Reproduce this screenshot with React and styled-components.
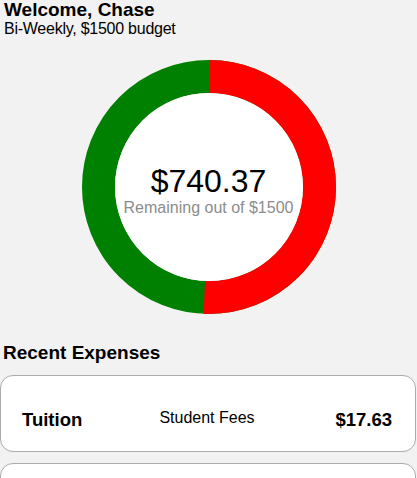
import React from "react";
import styled, { createGlobalStyle } from "styled-components";

const Global = createGlobalStyle`
  html, body { margin: 0; padding: 0; background: #f2f2f2; }
  body { font-family: "Liberation Sans", Arial, sans-serif; color: #000; }
`;

const Page = styled.div`
  display: flex;
  flex-direction: column;
  min-height: 478px;
  background: #f2f2f2;
`;

const Header = styled.header`
  padding: 0 4px;
`;

const Title = styled.h1`
  margin: 0;
  font-size: 19px;
  line-height: 20px;
  font-weight: 700;
`;

const Subtitle = styled.p`
  margin: 0;
  font-size: 16px;
  line-height: 18px;
  letter-spacing: -0.25px;
`;

const ChartWrap = styled.div`
  display: flex;
  justify-content: center;
  margin-top: 22px;
`;

const Chart = styled.div`
  position: relative;
  width: 254px;
  height: 254px;
`;

const ChartLabel = styled.div`
  position: absolute;
  inset: 0;
  padding-top: 6px;
  display: flex;
  flex-direction: column;
  align-items: center;
  justify-content: center;
`;

const Amount = styled.div`
  font-size: 32px;
  line-height: 36px;
`;

const Caption = styled.div`
  font-size: 16px;
  line-height: 18px;
  color: #8c8c8c;
`;

const SectionTitle = styled.h2`
  margin: 28px 0 0;
  padding: 0 3px;
  font-size: 19px;
  line-height: 22px;
  font-weight: 700;
`;

const List = styled.div`
  display: flex;
  flex-direction: column;
  gap: 11px;
  margin-top: 11px;
`;

const Card = styled.div`
  box-sizing: border-box;
  width: 416px;
  height: 77px;
  padding: 13px 23px 0 21px;
  background: #fff;
  border: 1px solid #ababab;
  border-radius: 13px;
  display: grid;
  grid-template-columns: 1fr auto 1fr;
  align-items: center;
`;

const Name = styled.span`
  font-size: 18.5px;
  font-weight: 700;
  justify-self: start;
`;

const Category = styled.span`
  font-size: 16px;
  margin-bottom: 5px;
  justify-self: center;
`;

const Price = styled.span`
  font-size: 18.5px;
  font-weight: 700;
  justify-self: end;
`;

const expenses = [
  { name: "Tuition", category: "Student Fees", amount: "$17.63" },
  { name: "", category: "", amount: "" },
];

function Donut({ spent, total }) {
  const r = 110.5;
  const c = 2 * Math.PI * r;
  const red = (spent / total) * c;
  return (
    <svg width="254" height="254" viewBox="0 0 254 254">
      <g transform="rotate(-90 127 127)">
        <circle cx="127" cy="127" r={r} fill="none" stroke="#008000" strokeWidth="33" />
        <circle
          cx="127"
          cy="127"
          r={r}
          fill="none"
          stroke="#ff0000"
          strokeWidth="33"
          strokeDasharray={`${red} ${c}`}
        />
      </g>
      <circle cx="127" cy="127" r="94" fill="#fff" />
    </svg>
  );
}

export default function App() {
  const total = 1500;
  const remaining = 740.37;
  return (
    <>
      <Global />
      <Page>
        <Header>
          <Title>Welcome, Chase</Title>
          <Subtitle>Bi-Weekly, $1500 budget</Subtitle>
        </Header>
        <ChartWrap>
          <Chart>
            <Donut spent={total - remaining} total={total} />
            <ChartLabel>
              <Amount>${remaining.toFixed(2)}</Amount>
              <Caption>Remaining out of ${total}</Caption>
            </ChartLabel>
          </Chart>
        </ChartWrap>
        <SectionTitle>Recent Expenses</SectionTitle>
        <List>
          {expenses.map((e, i) => (
            <Card key={i}>
              <Name>{e.name}</Name>
              <Category>{e.category}</Category>
              <Price>{e.amount}</Price>
            </Card>
          ))}
        </List>
      </Page>
    </>
  );
}
